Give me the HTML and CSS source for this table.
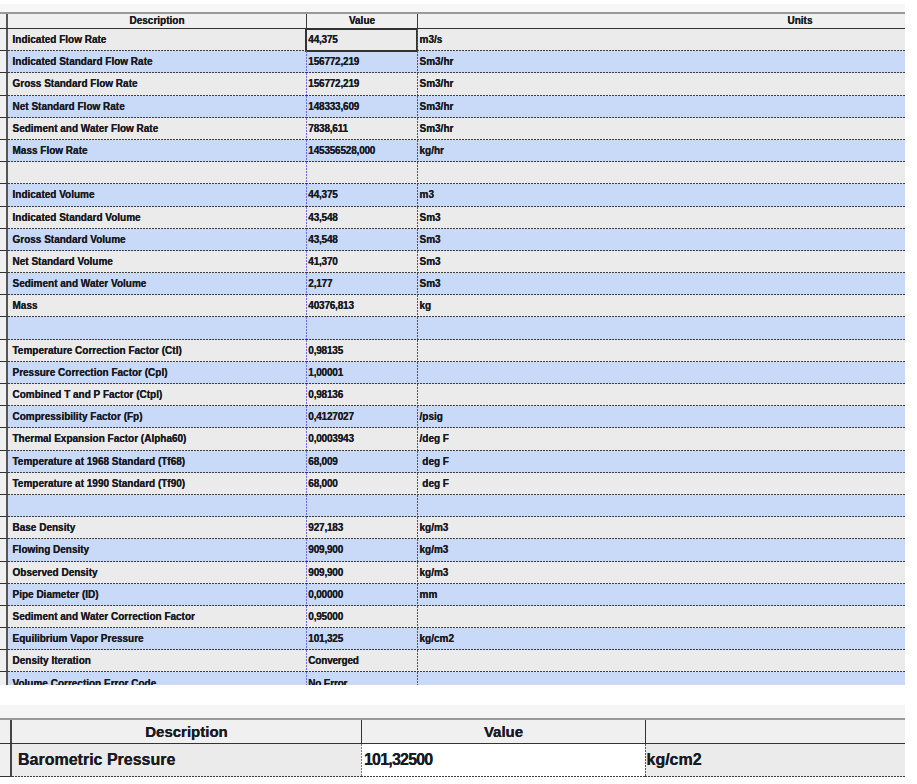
FILE: index.html
```html
<!DOCTYPE html>
<html>
<head>
<meta charset="utf-8">
<link rel="stylesheet" href="styles.css">
</head>
<body>
<div class="view top-view">
  <div class="strip"></div>
  <div class="grid">
    <div class="hrow">
      <div class="rh"></div>
      <div class="hc desc">Description</div>
      <div class="hc val">Value</div>
      <div class="hc unit">Units</div>
    </div>
    <div class="row g"><div class="rh"></div><div class="c desc">Indicated Flow Rate</div><div class="c val focus">44,375</div><div class="c unit">m3/s</div></div>
    <div class="row b"><div class="rh"></div><div class="c desc">Indicated Standard Flow Rate</div><div class="c val">156772,219</div><div class="c unit">Sm3/hr</div></div>
    <div class="row g"><div class="rh"></div><div class="c desc">Gross Standard Flow Rate</div><div class="c val">156772,219</div><div class="c unit">Sm3/hr</div></div>
    <div class="row b"><div class="rh"></div><div class="c desc">Net Standard Flow Rate</div><div class="c val">148333,609</div><div class="c unit">Sm3/hr</div></div>
    <div class="row g"><div class="rh"></div><div class="c desc">Sediment and Water Flow Rate</div><div class="c val">7838,611</div><div class="c unit">Sm3/hr</div></div>
    <div class="row b"><div class="rh"></div><div class="c desc">Mass Flow Rate</div><div class="c val">145356528,000</div><div class="c unit">kg/hr</div></div>
    <div class="row g"><div class="rh"></div><div class="c desc"></div><div class="c val"></div><div class="c unit"></div></div>
    <div class="row b"><div class="rh"></div><div class="c desc">Indicated Volume</div><div class="c val">44,375</div><div class="c unit">m3</div></div>
    <div class="row g"><div class="rh"></div><div class="c desc">Indicated Standard Volume</div><div class="c val">43,548</div><div class="c unit">Sm3</div></div>
    <div class="row b"><div class="rh"></div><div class="c desc">Gross Standard Volume</div><div class="c val">43,548</div><div class="c unit">Sm3</div></div>
    <div class="row g"><div class="rh"></div><div class="c desc">Net Standard Volume</div><div class="c val">41,370</div><div class="c unit">Sm3</div></div>
    <div class="row b"><div class="rh"></div><div class="c desc">Sediment and Water Volume</div><div class="c val">2,177</div><div class="c unit">Sm3</div></div>
    <div class="row g"><div class="rh"></div><div class="c desc">Mass</div><div class="c val">40376,813</div><div class="c unit">kg</div></div>
    <div class="row b"><div class="rh"></div><div class="c desc"></div><div class="c val"></div><div class="c unit"></div></div>
    <div class="row g"><div class="rh"></div><div class="c desc">Temperature Correction Factor (Ctl)</div><div class="c val">0,98135</div><div class="c unit"></div></div>
    <div class="row b"><div class="rh"></div><div class="c desc">Pressure Correction Factor (Cpl)</div><div class="c val">1,00001</div><div class="c unit"></div></div>
    <div class="row g"><div class="rh"></div><div class="c desc">Combined T and P Factor (Ctpl)</div><div class="c val">0,98136</div><div class="c unit"></div></div>
    <div class="row b"><div class="rh"></div><div class="c desc">Compressibility Factor (Fp)</div><div class="c val">0,4127027</div><div class="c unit">/psig</div></div>
    <div class="row g"><div class="rh"></div><div class="c desc">Thermal Expansion Factor (Alpha60)</div><div class="c val">0,0003943</div><div class="c unit">/deg F</div></div>
    <div class="row b"><div class="rh"></div><div class="c desc">Temperature at 1968 Standard (Tf68)</div><div class="c val">68,009</div><div class="c unit">&nbsp;deg F</div></div>
    <div class="row g"><div class="rh"></div><div class="c desc">Temperature at 1990 Standard (Tf90)</div><div class="c val">68,000</div><div class="c unit">&nbsp;deg F</div></div>
    <div class="row b"><div class="rh"></div><div class="c desc"></div><div class="c val"></div><div class="c unit"></div></div>
    <div class="row g"><div class="rh"></div><div class="c desc">Base Density</div><div class="c val">927,183</div><div class="c unit">kg/m3</div></div>
    <div class="row b"><div class="rh"></div><div class="c desc">Flowing Density</div><div class="c val">909,900</div><div class="c unit">kg/m3</div></div>
    <div class="row g"><div class="rh"></div><div class="c desc">Observed Density</div><div class="c val">909,900</div><div class="c unit">kg/m3</div></div>
    <div class="row b"><div class="rh"></div><div class="c desc">Pipe Diameter (ID)</div><div class="c val">0,00000</div><div class="c unit">mm</div></div>
    <div class="row g"><div class="rh"></div><div class="c desc">Sediment and Water Correction Factor</div><div class="c val">0,95000</div><div class="c unit"></div></div>
    <div class="row b"><div class="rh"></div><div class="c desc">Equilibrium Vapor Pressure</div><div class="c val">101,325</div><div class="c unit">kg/cm2</div></div>
    <div class="row g"><div class="rh"></div><div class="c desc">Density Iteration</div><div class="c val">Converged</div><div class="c unit"></div></div>
    <div class="row b"><div class="rh"></div><div class="c desc">Volume Correction Error Code</div><div class="c val">No Error</div><div class="c unit"></div></div>
  </div>
</div>

<div class="view bottom-view">
  <div class="strip2"></div>
  <div class="grid2">
    <div class="hrow2">
      <div class="rh2"></div>
      <div class="hc2 desc2">Description</div>
      <div class="hc2 val2">Value</div>
      <div class="hc2 unit2"></div>
    </div>
    <div class="row2">
      <div class="rh2"></div>
      <div class="c2 desc2">Barometric Pressure</div>
      <div class="c2 val2 white">101,32500</div>
      <div class="c2 unit2">kg/cm2</div>
    </div>
  </div>
</div>
</body>
</html>
```

FILE: styles.css
```css
* { box-sizing: border-box; }
html, body { margin: 0; padding: 0; background: #ffffff; }
body {
  font-family: "Liberation Sans", Arial, sans-serif;
  font-weight: bold;
  color: #1a1a22;
}

.view { width: 905px; overflow: hidden; }

/* ---------- top table ---------- */
.top-view { margin-top: 4px; height: 681px; }
.strip { height: 8px; background: #f6f6f6; }
.grid { width: 1182px; }

.hrow {
  display: flex;
  height: 17px;
  border-top: 2px solid #9a9a9a;
  border-bottom: 1.5px solid #333;
  background: #f0f0f0;
  font-size: 10px;
  text-shadow: 0 0 0.6px #1a1a22;
}
.hrow .rh { border-bottom: none; }
.hc {
  display: flex;
  align-items: center;
  justify-content: center;
  line-height: 1;
}
.hc.val, .hc.unit { border-left: 1.5px solid #3a3a3a; }

.rh {
  width: 8px;
  flex: none;
  background: #f0f0f0;
  border-right: 2px solid #555;
  border-bottom: 1px solid #333;
}
.desc { width: 298px; flex: none; }
.val { width: 111px; flex: none; }
.unit { width: 765px; flex: none; }

.row {
  display: flex;
  height: 22.2px;
  font-size: 10px;
  text-shadow: 0 0 0.6px #1a1a22;
}
.row.g { background: #ebebeb; }
.row.b { background: #c9daf8; }

.c {
  display: flex;
  align-items: center;
  white-space: pre;
  padding-bottom: 1px;
  background-image: repeating-linear-gradient(90deg, #3c3c3c 0 2px, transparent 2px 3px);
  background-size: 100% 1px;
  background-position: left bottom;
  background-repeat: no-repeat;
}
.c.desc { padding-left: 4.5px; }
.c.val {
  padding-left: 2.3px;
  letter-spacing: -0.2px;
  background-image:
    repeating-linear-gradient(90deg, #3c3c3c 0 2px, transparent 2px 3px),
    repeating-linear-gradient(180deg, #6a6ae6 0 2px, transparent 2px 3px);
  background-size: 100% 1px, 1px 100%;
  background-position: left bottom, left top;
}
.c.unit {
  padding-left: 2.5px;
  background-image:
    repeating-linear-gradient(90deg, #3c3c3c 0 2px, transparent 2px 3px),
    repeating-linear-gradient(180deg, #555 0 2px, transparent 2px 3px);
  background-size: 100% 1px, 1px 100%;
  background-position: left bottom, left top;
}
.c.focus { outline: 2px solid #333; outline-offset: -1px; }

/* ---------- bottom table ---------- */
.bottom-view { margin-top: 20px; height: 72px; }
.strip2 { height: 13px; background: #f5f5f5; }
.grid2 { width: 1182px; }

.hrow2 {
  display: flex;
  height: 26px;
  border-top: 2px solid #9a9a9a;
  border-bottom: 1.5px solid #333;
  background: #f0f0f0;
  font-size: 15px;
  text-shadow: 0 0 0.6px #1a1a22;
}
.hrow2 .rh2 { border-bottom: none; }
.hc2 {
  display: flex;
  align-items: center;
  justify-content: center;
}
.hc2.val2, .hc2.unit2 { border-left: 1.5px solid #333; }

.rh2 {
  width: 12px;
  flex: none;
  background: #f0f0f0;
  border-right: 2px solid #444;
  border-bottom: 1px solid #333;
}
.desc2 { width: 349px; flex: none; }
.val2 { width: 284px; flex: none; }
.unit2 { width: 537px; flex: none; }

.row2 {
  display: flex;
  height: 33px;
  font-size: 16px;
  background: #ebebeb;
  text-shadow: 0 0 0.6px #1a1a22;
}
.c2 {
  display: flex;
  align-items: center;
  padding-bottom: 1px;
  background-image: repeating-linear-gradient(90deg, #3c3c3c 0 2px, transparent 2px 3px);
  background-size: 100% 1px;
  background-position: left bottom;
  background-repeat: no-repeat;
}
.c2.desc2 { padding-left: 6px; }
.c2.val2 {
  padding-left: 3px;
  letter-spacing: -0.8px;
  background-color: #ffffff;
  background-image:
    repeating-linear-gradient(90deg, #3c3c3c 0 2px, transparent 2px 3px),
    repeating-linear-gradient(180deg, #6a6ae6 0 2px, transparent 2px 3px);
  background-size: 100% 1px, 1px 100%;
  background-position: left bottom, left top;
}
.c2.unit2 {
  padding-left: 1.5px;
  background-image:
    repeating-linear-gradient(90deg, #3c3c3c 0 2px, transparent 2px 3px),
    repeating-linear-gradient(180deg, #555 0 2px, transparent 2px 3px);
  background-size: 100% 1px, 1px 100%;
  background-position: left bottom, left top;
}
```
